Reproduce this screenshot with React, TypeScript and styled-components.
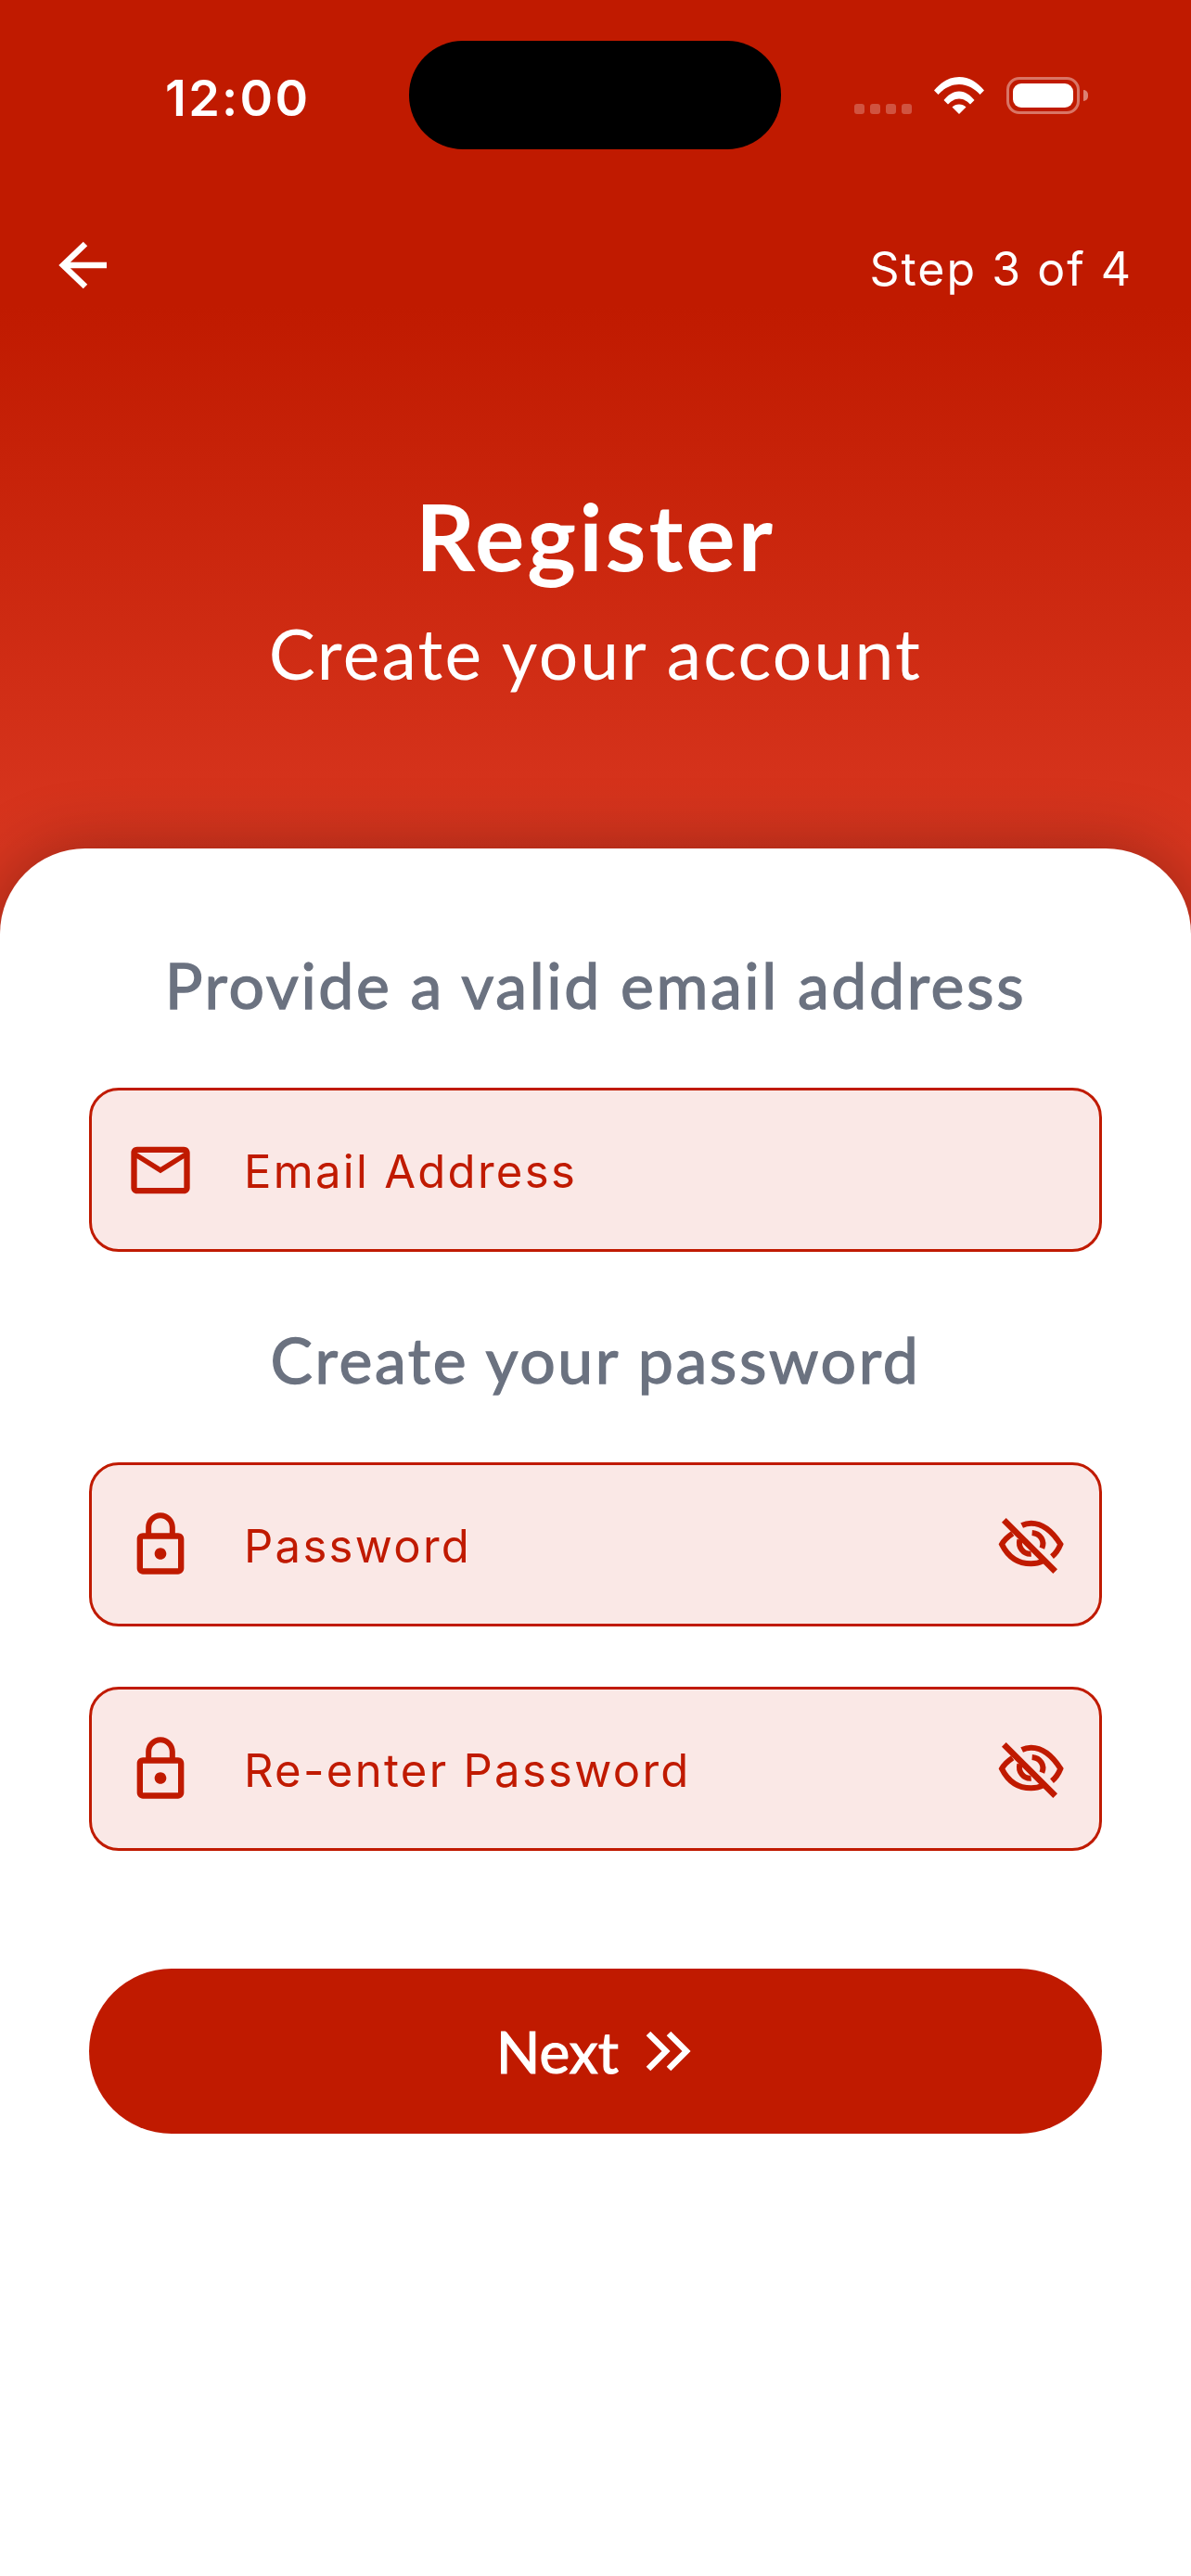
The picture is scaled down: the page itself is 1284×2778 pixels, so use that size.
import React from "react";
import styled, { createGlobalStyle } from "styled-components";
import { MdMailOutline, MdLockOutline } from "react-icons/md";

const RED = "#c01a00";
const HEADING = '"Lato", "Noto Sans", sans-serif';
const BODY = '"Inter", "Liberation Sans", sans-serif';

const Global = createGlobalStyle`
  html, body { margin: 0; padding: 0; background: #fff; }
  * { box-sizing: border-box; }
`;

const Page = styled.div`
  width: 1284px;
  height: 2778px;
  display: flex;
  flex-direction: column;
  overflow: hidden;
  background: #fff;
  font-family: ${BODY};
`;

const Header = styled.header`
  height: 1007px;
  flex: none;
  display: flex;
  flex-direction: column;
  color: #fff;
  background: linear-gradient(180deg, ${RED} 0, ${RED} 330px, #d8361f 915px);
`;

const StatusBar = styled.div`
  display: grid;
  grid-template-columns: 441px 401px 1fr;
  align-items: center;
  height: 117px;
  margin-top: 44px;
`;

const Time = styled.span`
  padding: 6px 0 0 178px;
  font: 600 54px/1 ${BODY};
  letter-spacing: 2.3px;
`;

const Island = styled.div`
  height: 117px;
  background: #000;
  border-radius: 58px;
`;

const StatusIcons = styled.div`
  display: flex;
  align-items: flex-end;
  height: 40px;
  padding-left: 79px;
`;

const SignalDots = styled.div`
  display: flex;
  gap: 6px;
  margin-right: 24px;
`;

const Dot = styled.i`
  width: 11px;
  height: 11px;
  border-radius: 3px;
  background: rgba(255, 255, 255, 0.25);
`;

const Battery = styled.div`
  position: relative;
  width: 79px;
  height: 40px;
  margin-left: 24px;
  padding: 4px;
  border: 3px solid rgba(255, 255, 255, 0.4);
  border-radius: 14px;
  &::after {
    content: "";
    position: absolute;
    right: -12px;
    top: 11px;
    width: 5px;
    height: 12px;
    border-radius: 0 6px 6px 0;
    background: rgba(255, 255, 255, 0.45);
  }
`;

const BatteryFill = styled.div`
  height: 100%;
  border-radius: 9px;
  background: #fff;
`;

const NavRow = styled.div`
  display: flex;
  align-items: center;
  justify-content: space-between;
  height: 60px;
  margin-top: 95px;
  padding: 0 63px 0 60px;
`;

const StepText = styled.span`
  padding-top: 8px;
  font: 400 50px/1 ${BODY};
  letter-spacing: 2px;
`;

const Title = styled.h1`
  margin: 211px 0 0;
  text-align: center;
  font: 700 100px/1 ${HEADING};
  letter-spacing: 3px;
`;

const Subtitle = styled.p`
  margin: 40px 0 0;
  text-align: center;
  font: 400 75px/1 ${HEADING};
  letter-spacing: 2.2px;
`;

const Sheet = styled.main`
  position: relative;
  flex: 1;
  display: flex;
  flex-direction: column;
  margin-top: -92px;
  padding: 0 96px;
  border-radius: 92px 92px 0 0;
  background: #fff;
  box-shadow: 0 0 72px rgba(0, 0, 0, 0.3);
`;

const SectionLabel = styled.h2<{ $top: number }>`
  margin: ${(p) => p.$top}px 0 0;
  height: 82px;
  text-align: center;
  color: #6b7280;
  font: 400 68px/82px ${HEADING};
  letter-spacing: 2.6px;
  -webkit-text-stroke: 1.3px #6b7280;
`;

const Field = styled.div<{ $top: number }>`
  display: flex;
  align-items: center;
  height: 177px;
  margin-top: ${(p) => p.$top}px;
  padding: 0 30px 0 36px;
  background: #fae8e6;
  border: 3px solid ${RED};
  border-radius: 32px;
  color: ${RED};
  svg { flex: none; }
`;

const Placeholder = styled.span`
  flex: 1;
  margin-left: 52px;
  padding-top: 3px;
  font: 400 49px/1 ${BODY};
  letter-spacing: 2.3px;
`;

const NextButton = styled.button`
  display: flex;
  align-items: center;
  justify-content: center;
  gap: 28px;
  height: 178px;
  margin-top: 127px;
  padding: 0 4px 0 0;
  border: 0;
  border-radius: 89px;
  background: ${RED};
  color: #fff;
  font: 400 62px/1 ${HEADING};
  -webkit-text-stroke: 1.2px #fff;
`;

const BackArrow = () => (
  <svg width="56" height="56" viewBox="0 0 56 56" fill="none" stroke="#fff" strokeWidth="6.5">
    <path d="M8 28H55" />
    <path d="M32 5L8 28L32 51" />
  </svg>
);

const Wifi = () => (
  <svg width="54" height="40" viewBox="0 0 54 40" fill="#fff">
    <path d="M0 14.5C7 6 16 0 27 0s20 6 27 14.5L49.5 19C44 13 36.5 8 27 8S10 13 4.5 19Z" />
    <path d="M10.5 25C14.5 20 20 15.5 27 15.5S39.5 20 43.5 25L39 29.5C36 26.5 32 23.5 27 23.5S18 26.5 15 29.5Z" />
    <path d="M19.5 32.5C21.5 30.5 24 29.5 27 29.5S32.5 30.5 34.5 32.5L27 40Z" />
  </svg>
);

const EyeOff = () => (
  <svg width="85" height="78" viewBox="0 0 255 234" fill="none" stroke={RED} strokeWidth="18">
    <path d="M65 80C50 90 38 100 30 115C50 155 82 178 125 178C140 178 150 176 162 170" />
    <path d="M95 54C105 49 115 47 125 47C168 47 198 80 220 115C214 130 204 145 192 155" />
    <path d="M88 100C82 125 100 148 125 146" />
    <path d="M128 78C155 80 170 105 160 128" />
    <path d="M37 37L203 203" strokeWidth="20" />
  </svg>
);

const DoubleChevron = () => (
  <svg width="50" height="44" viewBox="0 0 50 44" fill="none" stroke="#fff" strokeWidth="6.5">
    <path d="M4 3L23 22L4 41" />
    <path d="M26 3L45 22L26 41" />
  </svg>
);

export default function App() {
  return (
    <Page>
      <Global />
      <Header>
        <StatusBar>
          <Time>12:00</Time>
          <Island />
          <StatusIcons>
            <SignalDots>
              <Dot />
              <Dot />
              <Dot />
              <Dot />
            </SignalDots>
            <Wifi />
            <Battery>
              <BatteryFill />
            </Battery>
          </StatusIcons>
        </StatusBar>
        <NavRow>
          <BackArrow />
          <StepText>Step 3 of 4</StepText>
        </NavRow>
        <Title>Register</Title>
        <Subtitle>Create your account</Subtitle>
      </Header>
      <Sheet>
        <SectionLabel $top={106}>Provide a valid email address</SectionLabel>
        <Field $top={70}>
          <MdMailOutline size={76} />
          <Placeholder>Email Address</Placeholder>
        </Field>
        <SectionLabel $top={75}>Create your password</SectionLabel>
        <Field $top={70}>
          <MdLockOutline size={76} />
          <Placeholder>Password</Placeholder>
          <EyeOff />
        </Field>
        <Field $top={65}>
          <MdLockOutline size={76} />
          <Placeholder>Re-enter Password</Placeholder>
          <EyeOff />
        </Field>
        <NextButton>
          Next
          <DoubleChevron />
        </NextButton>
      </Sheet>
    </Page>
  );
}
